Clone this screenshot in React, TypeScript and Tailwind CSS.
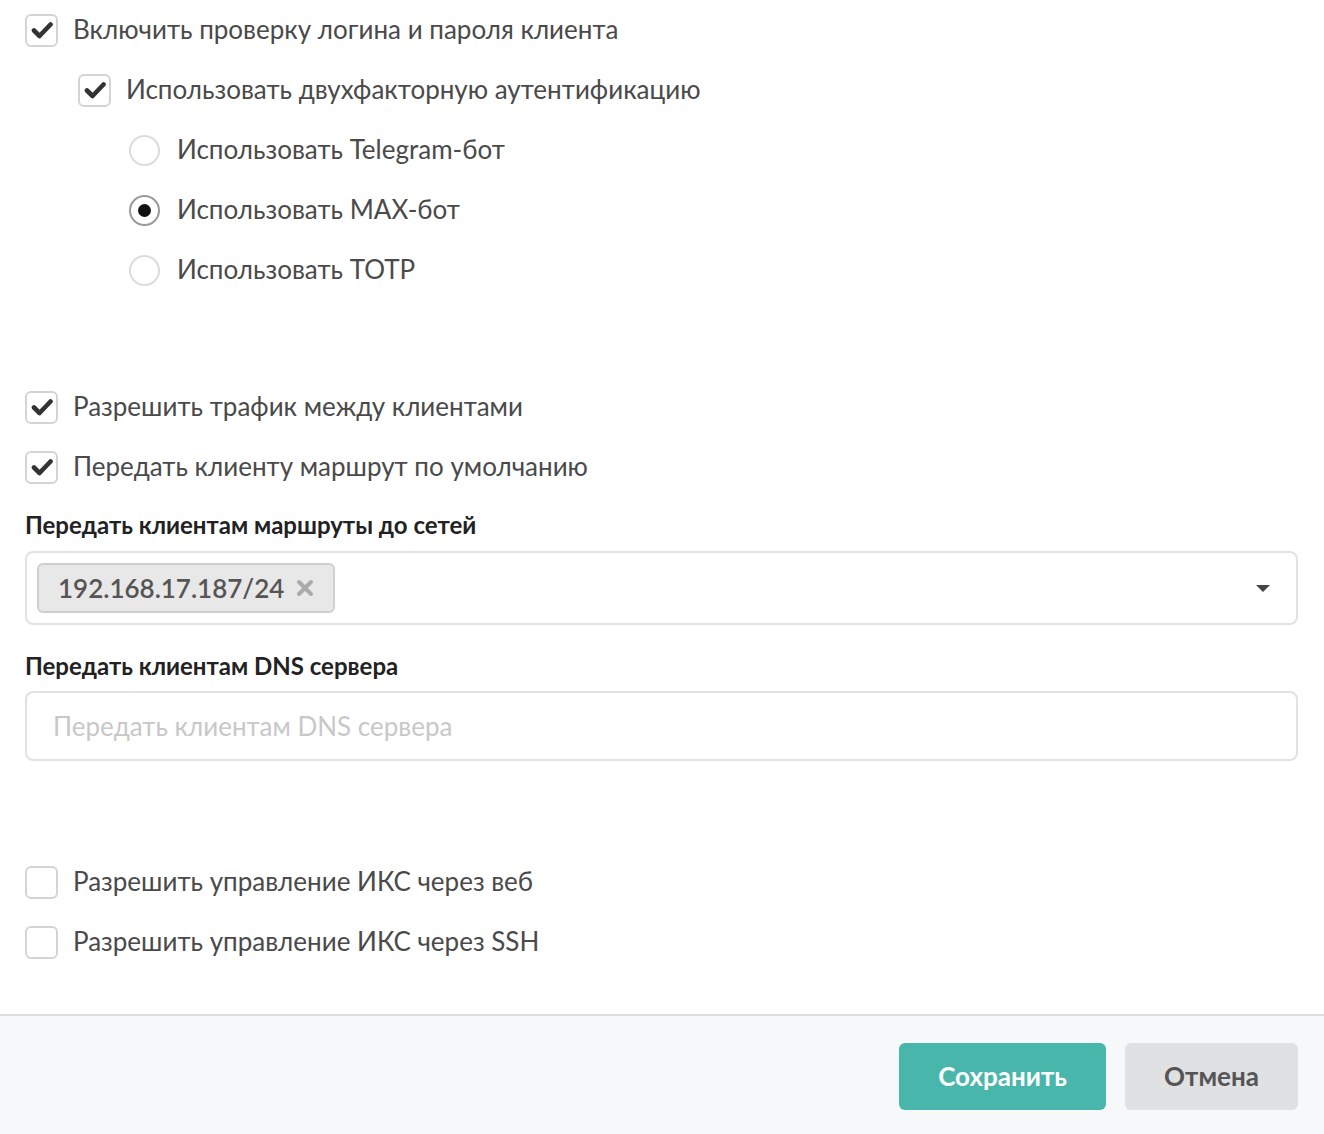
const font = { fontFamily: 'Lato, "Noto Sans", sans-serif' };

function CheckMark() {
  return (
    <svg viewBox="0 0 22 18" className="w-[22px] h-[18px]">
      <path
        d="M3 9.5 L8.5 15 L19.5 3.5"
        fill="none"
        stroke="#333"
        strokeWidth="4.6"
        strokeLinecap="round"
        strokeLinejoin="round"
      />
    </svg>
  );
}

function Checkbox({ checked, label }: { checked?: boolean; label: string }) {
  return (
    <label className="flex items-center h-[60px] cursor-pointer">
      <span className="w-[33px] h-[33px] shrink-0 rounded-[6px] border-2 border-[#d4d4d4] bg-white flex items-center justify-center">
        {checked && <CheckMark />}
      </span>
      <span className="ml-[15px] text-[26px] text-[#4a4a4a] leading-[32px] -mt-[2px]">{label}</span>
    </label>
  );
}

function Radio({ checked, label }: { checked?: boolean; label: string }) {
  return (
    <label className="flex items-center h-[60px] cursor-pointer">
      <span
        className={`w-[31px] h-[31px] shrink-0 rounded-full border-2 bg-white flex items-center justify-center ${
          checked ? 'border-[#9a9a9a]' : 'border-[#dcdcdc]'
        }`}
      >
        {checked && <span className="w-[13px] h-[13px] rounded-full bg-[#111]" />}
      </span>
      <span className="ml-[17px] text-[26px] text-[#4a4a4a] leading-[32px] -mt-[2px]">{label}</span>
    </label>
  );
}

export default function App() {
  return (
    <div className="min-h-[1134px] bg-white flex flex-col" style={font}>
      <div className="pl-[25px] pr-[26px] flex-1">
        {/* авторизация клиента */}
        <Checkbox checked label="Включить проверку логина и пароля клиента" />
        <div className="pl-[53px]">
          <Checkbox checked label="Использовать двухфакторную аутентификацию" />
          <div className="pl-[51px]">
            <Radio label="Использовать Telegram-бот" />
            <Radio checked label="Использовать MAX-бот" />
            <Radio label="Использовать TOTP" />
          </div>
        </div>

        <div className="mt-[77px]">
          <Checkbox checked label="Разрешить трафик между клиентами" />
          <Checkbox checked label="Передать клиенту маршрут по умолчанию" />
        </div>

        {/* маршруты */}
        <div className="mt-[12px] text-[24px] font-bold text-[#222] leading-[32px]">
          Передать клиентам маршруты до сетей
        </div>
        <div className="mt-[10px] h-[74px] border-2 border-[#e2e2e2] rounded-[8px] flex items-center pl-[10px] pr-[26px]">
          <span className="h-[50px] px-[19px] flex items-center gap-[12px] bg-[#e8e8e8] border-2 border-[#cfcfcf] rounded-[6px]">
            <span className="text-[26px] font-semibold text-[#555]">192.168.17.187/24</span>
            <svg viewBox="0 0 18 18" className="w-[18px] h-[18px]">
              <path d="M3 3 L15 15 M15 3 L3 15" stroke="#aaa" strokeWidth="4" strokeLinecap="round" />
            </svg>
          </span>
          <span className="ml-auto w-0 h-0 border-l-[7px] border-r-[7px] border-t-[7px] border-l-transparent border-r-transparent border-t-[#444]" />
        </div>

        {/* DNS */}
        <div className="mt-[25px] text-[24px] font-bold text-[#222] leading-[32px]">
          Передать клиентам DNS сервера
        </div>
        <input
          className="mt-[9px] w-full h-[70px] border-2 border-[#e2e2e2] rounded-[8px] px-[26px] text-[26px] text-[#4a4a4a] placeholder:text-[#c8c8c8] outline-none"
          placeholder="Передать клиентам DNS сервера"
        />

        <div className="mt-[91px]">
          <Checkbox label="Разрешить управление ИКС через веб" />
          <Checkbox label="Разрешить управление ИКС через SSH" />
        </div>
      </div>

      <div className="h-[120px] mt-[38px] border-t-2 border-[#dcdcdc] bg-[#f7f8fa] flex items-start justify-end gap-[19px] pr-[26px] pt-[27px]">
        <button className="w-[207px] h-[67px] rounded-[6px] bg-[#49b6ab] text-white text-[26px] font-bold">
          Сохранить
        </button>
        <button className="w-[173px] h-[67px] rounded-[6px] bg-[#e0e1e3] text-[#555] text-[26px] font-bold">
          Отмена
        </button>
      </div>
    </div>
  );
}
